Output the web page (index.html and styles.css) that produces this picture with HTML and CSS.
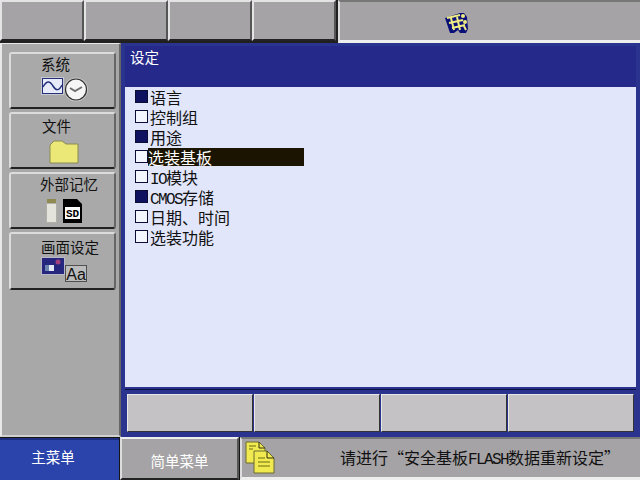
FILE: index.html
```html
<!DOCTYPE html>
<html lang="zh-CN">
<head>
  <meta charset="UTF-8">
  <title>设定</title>
  <link rel="stylesheet" href="styles.css">
</head>
<body>
<div class="topbar">
  <div class="top-btn"></div>
  <div class="top-btn"></div>
  <div class="top-btn"></div>
  <div class="top-btn"></div>
  <div class="top-status">
    <svg class="status-icon" width="24" height="22" viewBox="0 0 24 22">
      <path d="M0 6 L15 1 L19 1 L22 5 L23 17 L21 21 L15 21 L13 18 L9 21 L5 21 Z" fill="#0a1078"/>
      <path d="M2 6 L15 3 M4 11 L18 8 M7 16 L20 13 M6 6 L9 18 M12 5 L15 18 M19 14 L21 18" stroke="#f0ec84" stroke-width="2" fill="none"/>
      <circle cx="18" cy="4" r="2" fill="#f0ec84"/>
      <circle cx="20" cy="10" r="2" fill="#f0ec84"/>
    </svg>
  </div>
</div>

<div class="middle">
  <div class="sidebar">
    <div class="side-btn">
      <span class="side-label">系统</span>
      <svg class="side-icon" width="48" height="25" viewBox="0 0 48 25">
        <rect x="0" y="0" width="23" height="18" fill="#c8c8d0"/>
        <rect x="1.500" y="1.500" width="20" height="15" fill="#e8ecfa" stroke="#24307a"/>
        <path d="M2 10 C6 3 9 4 12 9 C15 14 18 14 21 8" stroke="#24307a" stroke-width="1.500" fill="none"/>
        <circle cx="35" cy="12.500" r="12" fill="#c8c8c8"/>
        <circle cx="35" cy="12.500" r="10.500" fill="#f6f6f6" stroke="#303030" stroke-width="1.200"/>
        <path d="M29 11 L34 14 L41 10" stroke="#707070" stroke-width="2" fill="none"/>
      </svg>
    </div>
    <div class="side-btn">
      <span class="side-label file-label">文件</span>
      <svg class="side-icon folder" width="30" height="24" viewBox="0 0 30 24">
        <path d="M1 23 L1 5 L5 1 L13 1 L17 4 L29 4 L29 23 Z" fill="#ece878" stroke="#8a8a50"/>
      </svg>
    </div>
    <div class="side-btn">
      <span class="side-label storage-label">外部记忆</span>
      <svg class="side-icon storage" width="37" height="24" viewBox="0 0 37 24">
        <rect x="1" y="0" width="9" height="5" fill="#8f8a50"/>
        <rect x="0.500" y="4.500" width="10" height="19" fill="#e4e4dc" stroke="#b0b0a8"/>
        <path d="M17 0 L31 0 L36 5 L36 24 L17 24 Z" fill="#000"/>
        <rect x="19" y="8" width="15" height="12" fill="#fff"/>
        <text class="sd-text" x="26.500" y="18">SD</text>
      </svg>
    </div>
    <div class="side-btn last">
      <span class="side-label screen-label">画面设定</span>
      <svg class="side-icon screen" width="47" height="25" viewBox="0 0 47 25">
        <rect x="0.500" y="0.500" width="23" height="17" fill="#26267e" stroke="#b8b8c8"/>
        <rect x="4" y="8" width="9" height="6" fill="#e4e8f4"/>
        <rect x="4" y="8" width="4" height="6" fill="#6a86b0"/>
        <circle cx="17" cy="5" r="2.500" fill="#a04080"/>
        <rect x="24.500" y="8.500" width="21" height="16" fill="#bcbcbc" stroke="#505050"/>
        <text class="aa-text" x="35" y="23">Aa</text>
      </svg>
    </div>
  </div>

  <div class="main">
    <div class="title-bar">设定</div>
    <ul class="menu-list">
      <li class="row"><span class="box on"></span><span class="row-text">语言</span></li>
      <li class="row"><span class="box"></span><span class="row-text">控制组</span></li>
      <li class="row"><span class="box on"></span><span class="row-text">用途</span></li>
      <li class="row selected"><span class="box"></span><span class="row-text">选装基板</span></li>
      <li class="row"><span class="box"></span><span class="row-text"><span class="latin">IO</span>模块</span></li>
      <li class="row"><span class="box on"></span><span class="row-text"><span class="latin">CMOS</span>存储</span></li>
      <li class="row"><span class="box"></span><span class="row-text">日期、时间</span></li>
      <li class="row"><span class="box"></span><span class="row-text">选装功能</span></li>
    </ul>
    <div class="softkeys">
      <div class="softkey"></div>
      <div class="softkey"></div>
      <div class="softkey"></div>
      <div class="softkey"></div>
    </div>
  </div>
</div>

<div class="footer">
  <div class="main-menu">主菜单</div>
  <div class="simple-menu">简单菜单</div>
  <div class="message">
    <svg class="msg-icon" width="32" height="34" viewBox="0 0 32 34">
      <path d="M1 1 L14 1 L20 7 L20 22 L1 22 Z" fill="#f0ea50" stroke="#6a6a30"/>
      <path d="M14 1 L14 7 L20 7" fill="none" stroke="#2a2a10"/>
      <path d="M9 10 L22 10 L29 17 L29 32 L9 32 Z" fill="#f0ea50" stroke="#6a6a30"/>
      <path d="M22 10 L22 17 L29 17" fill="none" stroke="#2a2a10"/>
      <path d="M13 17 H20 M13 21 H25 M13 25 H25 M4 5 H11 M4 8 H8" stroke="#6a6a10" fill="none"/>
    </svg>
    <span class="msg-text">请进行“安全基板<span class="latin">FLASH</span>数据重新设定”</span>
  </div>
</div>
</body>
</html>
```

FILE: styles.css
```css
html, body {
  margin: 0;
  padding: 0;
}

body {
  width: 640px;
  height: 480px;
  overflow: hidden;
  display: flex;
  flex-direction: column;
  background: #a8a8a8;
  color: #111;
  font: 15px "Noto Sans CJK SC", "Liberation Sans", sans-serif;
}

.latin {
  font-family: "Liberation Mono", monospace;
  font-size: 16px;
  line-height: 0;
  letter-spacing: -1.6px;
}

/* top row */
.topbar {
  display: flex;
  height: 43px;
  flex: none;
  background: #202020;
}

.top-btn {
  width: 84px;
  box-sizing: border-box;
  height: 41px;
  background: #a5a3a5;
  border: 2px solid;
  border-color: #e4e4e4 #555 #222 #e4e4e4;
}

.top-status {
  margin-left: 2px;
  flex: 1;
  height: 43px;
  box-sizing: border-box;
  background: #a5a3a5;
  border-left: 2px solid #ddd;
  border-top: 2px solid #777;
  border-bottom: 3px solid #eee;
  padding: 10px 0 0 105px;
}

.status-icon {
  display: block;
}

/* left column */
.middle {
  display: flex;
  height: 394px;
  flex: none;
}

.sidebar {
  width: 121px;
  flex: none;
  box-sizing: border-box;
  padding: 8px 4px 0 7px;
  background: #a8a8a8;
  border-left: 2px solid #e8e8e8;
  border-top: 1px solid #e8e8e8;
  border-right: 2px solid #666;
  border-bottom: 2px solid #d0d0d0;
  display: flex;
  flex-direction: column;
  gap: 3px;
}

.side-btn {
  height: 57px;
  width: 107px;
  box-sizing: border-box;
  background: #a9a9a9;
  border: 2px solid;
  border-color: #dcdcdc #666 #222 #dcdcdc;
  border-radius: 3px;
  display: flex;
  flex-direction: column;
  align-items: flex-start;
  padding-left: 30px;
}

.side-btn.last {
  height: 58px;
}

.side-label {
  font-size: 14.500px;
  line-height: 20px;
  white-space: nowrap;
}

.file-label {
  margin-left: 1px;
  margin-top: 2px;
}

.storage-label {
  margin-left: -1px;
}

.screen-label {
  margin-top: 3px;
}

.side-icon {
  margin-top: 3px;
}

.folder {
  margin: 4px 0 0 8px;
}

.storage {
  margin: 5px 0 0 5px;
}

.screen {
  margin-top: 0;
}

.sd-text {
  font: bold 11px "Liberation Mono", monospace;
  text-anchor: middle;
}

.aa-text {
  font: 16px "Liberation Sans", sans-serif;
  text-anchor: middle;
  fill: #111;
}

/* main panel */
.main {
  flex: 1;
  background: #2a348e;
  display: flex;
  flex-direction: column;
  padding: 3px 4px 3px 4px;
  box-sizing: border-box;
}

.title-bar {
  height: 41px;
  flex: none;
  box-sizing: border-box;
  padding: 0 0 0 5px;
  color: #fff;
  font-size: 14.500px;
  line-height: 22px;
  background: #24298a;
}

.menu-list {
  list-style: none;
  margin: 0;
  padding: 0 0 0 10px;
  height: 300px;
  flex: none;
  box-sizing: border-box;
  background: #e2e6fb;
}

.row {
  display: flex;
  align-items: center;
  height: 20px;
}

.box {
  width: 13px;
  height: 13px;
  margin-top: -1px;
  box-sizing: border-box;
  border: 1px solid #0b0b33;
  background: #f4f6ff;
  flex: none;
}

.box.on {
  background: #0e1060;
}

.row-text {
  margin-left: 2px;
  font-size: 16px;
  line-height: 18px;
  white-space: nowrap;
}

.selected .row-text {
  margin-left: 0;
  width: 156px;
  background: #1a1400;
  color: #fff;
}

.softkeys {
  display: flex;
  flex: 1;
  margin-top: 2px;
  padding: 4px 2px 2px 2px;
  border-top: 1px solid #0c1040;
  gap: 1px;
}

.softkey {
  flex: 1;
  box-sizing: border-box;
  background: #c4c2c4;
  border: 1px solid;
  border-color: #e8e8e8 #333 #333 #e8e8e8;
}

/* bottom row */
.footer {
  display: flex;
  height: 43px;
  flex: none;
  background: #151515;
}

.main-menu {
  width: 119px;
  flex: none;
  box-sizing: border-box;
  margin-top: 1px;
  padding: 0 13px 0 0;
  background: #2b44ac;
  border-top: 2px solid #1c2c80;
  color: #fff;
  font-size: 14.500px;
  line-height: 34px;
  text-align: center;
}

.simple-menu {
  width: 119px;
  flex: none;
  margin-left: 1px;
  box-sizing: border-box;
  background: #a5a3a5;
  color: #fff;
  font-size: 14.500px;
  padding-top: 8px;
  line-height: 28px;
  text-align: center;
  border: 2px solid;
  border-color: #eee #555 #222 #ddd;
}

.message {
  flex: 1;
  margin-left: 1px;
  box-sizing: border-box;
  background: #a5a3a5;
  border-top: 2px solid #777;
  border-left: 2px solid #ddd;
  border-bottom: 3px solid #eee;
  display: flex;
  align-items: center;
}

.msg-icon {
  margin: 0 0 0 3px;
  flex: none;
}

.msg-text {
  margin: -2px 0 0 63px;
  font-size: 16px;
  white-space: nowrap;
}
```
